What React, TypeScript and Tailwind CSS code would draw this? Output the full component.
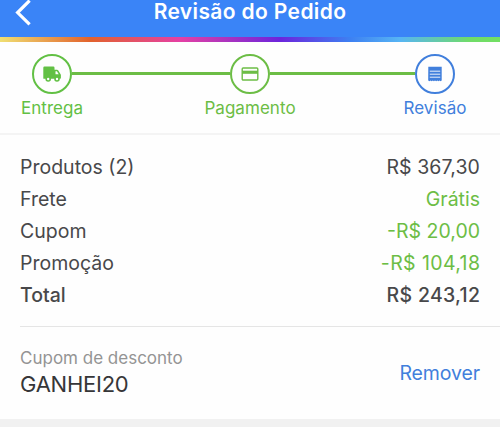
import type { ReactNode } from "react";

type SummaryRow = {
  label: string;
  value: string;
  labelClass?: string;
  valueClass?: string;
};

const rows: SummaryRow[] = [
  { label: "Produtos (2)", value: "R$ 367,30", valueClass: "tracking-[0.1px]" },
  { label: "Frete", value: "Grátis", valueClass: "text-[#6cbd45]" },
  { label: "Cupom", value: "-R$ 20,00", valueClass: "text-[#6cbd45]" },
  {
    label: "Promoção",
    value: "-R$ 104,18",
    valueClass: "text-[#6cbd45] tracking-[0.4px] -mr-[0.4px]",
  },
  {
    label: "Total",
    value: "R$ 243,12",
    labelClass: "font-medium",
    valueClass: "font-medium tracking-[0.3px] -mr-[0.3px]",
  },
];

function TruckIcon() {
  return (
    <svg width="18" height="16" viewBox="0 0 18 16" fill="currentColor">
      <path d="M1.5 0.5H10.3a1.2 1.2 0 0 1 1.2 1.2V3.7H14a1.6 1.6 0 0 1 1.3.7L17.6 8.2a1.5 1.5 0 0 1 .3.9V12a.8.8 0 0 1-.8.8H.9a.6.6 0 0 1-.6-.6V1.7A1.2 1.2 0 0 1 1.5.5Z" />
      <path d="M12.5 5.3h1.4l1.8 2.9h-3.2Z" fill="#fefefe" />
      <circle cx="5.2" cy="13" r="2" fill="#fefefe" stroke="currentColor" strokeWidth="1.6" />
      <circle cx="14" cy="13" r="2" fill="#fefefe" stroke="currentColor" strokeWidth="1.6" />
    </svg>
  );
}

function CardIcon() {
  return (
    <svg width="18" height="14" viewBox="0 0 18 14" fill="none">
      <rect x="1.2" y="1" width="15.6" height="12" rx="1" stroke="currentColor" strokeWidth="1.4" />
      <path d="M1 3.7h16v3.1H1z" fill="currentColor" />
    </svg>
  );
}

function ReceiptIcon() {
  return (
    <svg width="14" height="16" viewBox="0 0 14 16" fill="currentColor">
      <path d="M.3.8H13.7V14.4l-1.1.9-1.1-.9-1.1.9-1.1-.9-1.1.9-1.2-.9-1.1.9-1.1-.9-1.1.9-1.1-.9-1.1.9-1.3-.9Z" />
      <path d="M1.8 5.2H12.2M1.8 8.2H12.2M1.8 11.2H12.2" stroke="#fefefe" strokeWidth="0.9" />
    </svg>
  );
}

function Step({
  label,
  className,
  children,
}: {
  label: string;
  className: string;
  children: ReactNode;
}) {
  return (
    <div className={`flex w-10 shrink-0 flex-col items-center ${className}`}>
      <div className="flex h-10 w-10 items-center justify-center rounded-full border-2 border-current">
        {children}
      </div>
      <span className="mt-0.5 whitespace-nowrap text-[17px] leading-6 tracking-[0.05px]">
        {label}
      </span>
    </div>
  );
}

export default function App() {
  return (
    <main className="flex h-[427px] w-[500px] flex-col overflow-hidden bg-[#fefefe] font-['Inter',sans-serif] text-[#48484a]">
      <header className="grid h-[37px] shrink-0 grid-cols-[1fr_auto_1fr] bg-[#3a84f7] text-white">
        <button aria-label="Voltar" className="ml-[15px] h-[26px] w-[17px]">
          <svg width="17" height="26" viewBox="0 0 17 26" fill="none">
            <path d="M14.6.6 2.6 12.6 14.6 24.4" stroke="currentColor" strokeWidth="3.2" />
          </svg>
        </button>
        <h1 className="whitespace-nowrap text-[21px] font-semibold leading-6 tracking-[0.37px]">
          Revisão do Pedido
        </h1>
      </header>
      <div className="h-[5px] shrink-0 bg-[linear-gradient(90deg,#f0df72_0%,#e2622c_18%,#e540a4_36%,#6c24dc_56%,#3d80f2_70%,#57b5f4_80%,#70dc68_94%,#72df62_100%)]" />

      <nav className="flex h-[93px] shrink-0 items-start border-b-2 border-[#f4f4f4] pl-8 pr-[45px] pt-3">
        <Step label="Entrega" className="text-[#62c044]">
          <TruckIcon />
        </Step>
        <div className="mt-[18px] h-[3px] w-[158px] bg-[#6cbd45]" />
        <Step label="Pagamento" className="text-[#6cbd45]">
          <CardIcon />
        </Step>
        <div className="mt-[18px] h-[3px] flex-1 bg-[#6cbd45]" />
        <Step label="Revisão" className="text-[#417fdc]">
          <ReceiptIcon />
        </Step>
      </nav>

      <dl className="ml-5 h-[192px] shrink-0 border-b border-[#e5e5e5] pr-5 pt-4 text-[19.5px] leading-8">
        {rows.map((row) => (
          <div key={row.label} className="flex justify-between">
            <dt className={row.labelClass}>{row.label}</dt>
            <dd className={row.valueClass}>{row.value}</dd>
          </div>
        ))}
      </dl>

      <section className="flex h-[92px] shrink-0 items-center justify-between px-5">
        <div className="pb-0.5">
          <p className="text-[17px] leading-6 text-[#949494]">Cupom de desconto</p>
          <p className="text-[22px] leading-7 tracking-[-0.25px] text-[#363638]">GANHEI20</p>
        </div>
        <button className="pt-px text-[19.5px] tracking-[-0.1px] text-[#417fdc]">Remover</button>
      </section>
      <div className="flex-1 bg-[#f1f1f1]" />
    </main>
  );
}
